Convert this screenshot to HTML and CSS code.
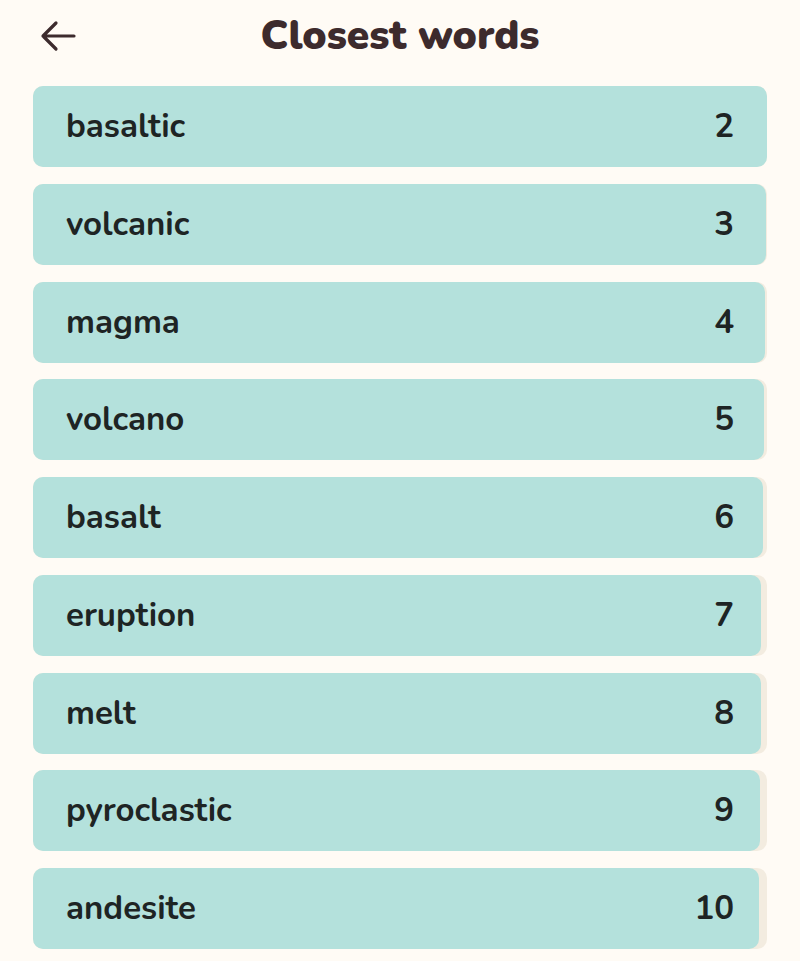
FILE: index.html
```html
<!DOCTYPE html>
<html lang="en">
<head>
<meta charset="utf-8">
<title>Closest words</title>
<link rel="stylesheet" href="styles.css">
</head>
<body>
<div class="page">
  <header class="header">
    <button class="back" aria-label="Back">
      <svg width="36" height="32" viewBox="0 0 36 32" fill="none" stroke="#3d2b2d" stroke-width="3.2" stroke-linecap="round" stroke-linejoin="round"><path d="M34 16H3M16 3L3 16l13 13"/></svg>
    </button>
    <h1 class="title">Closest words</h1>
  </header>
  <ul class="list">
    <li class="row"><div class="bar" style="width:100%"></div><span class="word">basaltic</span><span class="rank">2</span></li>
    <li class="row"><div class="bar" style="width:99.85%"></div><span class="word">volcanic</span><span class="rank">3</span></li>
    <li class="row"><div class="bar" style="width:99.7%"></div><span class="word">magma</span><span class="rank">4</span></li>
    <li class="row"><div class="bar" style="width:99.55%"></div><span class="word">volcano</span><span class="rank">5</span></li>
    <li class="row"><div class="bar" style="width:99.4%"></div><span class="word">basalt</span><span class="rank">6</span></li>
    <li class="row"><div class="bar" style="width:99.25%"></div><span class="word">eruption</span><span class="rank">7</span></li>
    <li class="row"><div class="bar" style="width:99.15%"></div><span class="word">melt</span><span class="rank">8</span></li>
    <li class="row"><div class="bar" style="width:99.05%"></div><span class="word">pyroclastic</span><span class="rank">9</span></li>
    <li class="row"><div class="bar" style="width:98.9%"></div><span class="word">andesite</span><span class="rank">10</span></li>
  </ul>
</div>
</body>
</html>
```

FILE: styles.css
```css
* { box-sizing: border-box; }
html, body { margin: 0; padding: 0; background: #fffbf5; }
body { font-family: "Nunito", "Lato", "Open Sans", sans-serif; color: #1e2424; }
.page { padding: 0 33px; }
.header {
  height: 72px;
  display: flex;
  align-items: center;
  justify-content: center;
  position: relative;
}
.back {
  position: absolute;
  left: 7px;
  top: 20px;
  background: none;
  border: 0;
  padding: 0;
  display: flex;
  cursor: pointer;
}
.title {
  margin: 0;
  font-size: 40.5px;
  font-weight: 900;
  color: #3d2b2d;
  position: relative;
  top: -1px;
}
.list {
  list-style: none;
  margin: 14px 0 0;
  padding: 0;
  display: flex;
  flex-direction: column;
  gap: 16.75px;
}
.row {
  position: relative;
  height: 81px;
  background: #f3ece0;
  border-radius: 10px;
  display: flex;
  align-items: center;
  justify-content: space-between;
  padding: 0 33px;
  font-size: 33px;
  font-weight: 700;
}
.bar {
  position: absolute;
  left: 0;
  top: 0;
  bottom: 0;
  background: #b4e1dc;
  border-radius: 10px;
}
.word, .rank { position: relative; }
```
